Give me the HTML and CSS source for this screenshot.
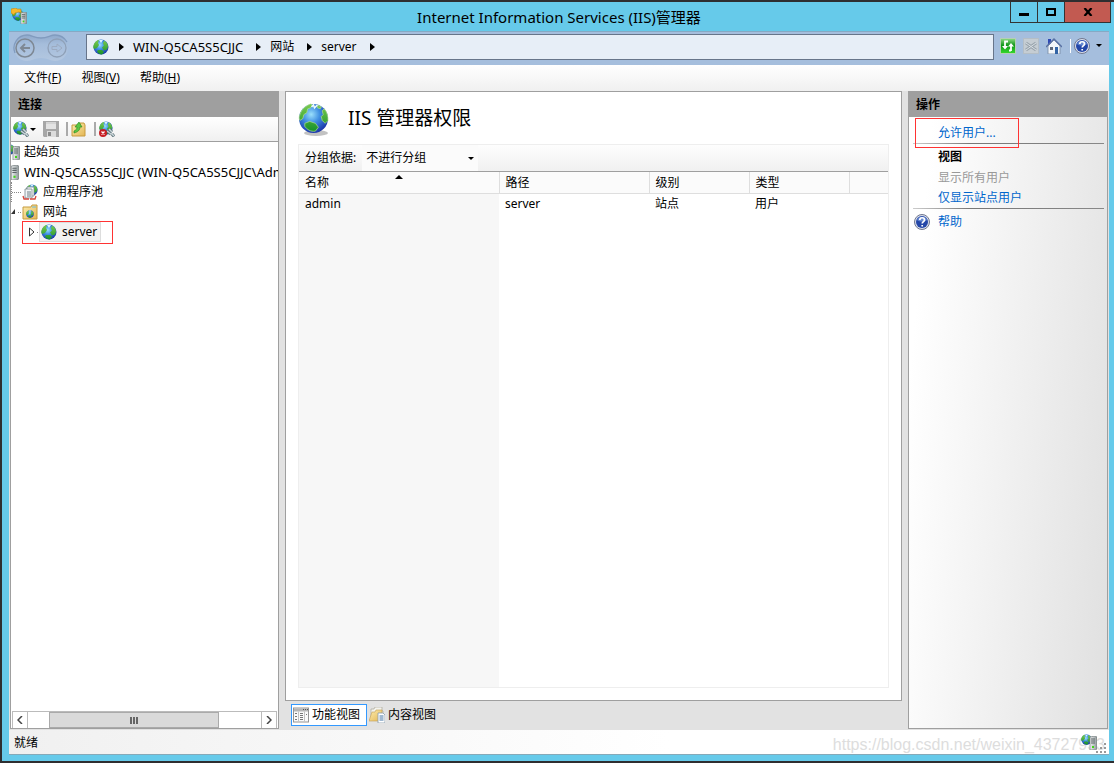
FILE: index.html
```html
<!DOCTYPE html>
<html lang="zh-CN">
<head>
<meta charset="utf-8">
<title>Internet Information Services (IIS)管理器</title>
<link rel="stylesheet" href="styles.css">
</head>
<body>
<svg class="defs" aria-hidden="true">
  <defs>
    <radialGradient id="sea" cx="0.42" cy="0.36" r="0.65"><stop offset="0" stop-color="#9be0fb"/><stop offset="0.45" stop-color="#3f8fe2"/><stop offset="1" stop-color="#1a36a8"/></radialGradient>
    <linearGradient id="leaf" x1="0" y1="0" x2="0" y2="1"><stop offset="0" stop-color="#7ccb4e"/><stop offset="1" stop-color="#16912a"/></linearGradient>
    <linearGradient id="gold" x1="0" y1="0" x2="1" y2="1"><stop offset="0" stop-color="#fdeeb0"/><stop offset="1" stop-color="#e3b553"/></linearGradient>
    <linearGradient id="steel" x1="0" y1="0" x2="1" y2="0"><stop offset="0" stop-color="#f2f4f5"/><stop offset="1" stop-color="#8e9799"/></linearGradient>
    <linearGradient id="lime" x1="0" y1="0" x2="0" y2="1"><stop offset="0" stop-color="#8fdc84"/><stop offset="0.45" stop-color="#12961a"/><stop offset="1" stop-color="#35dc2c"/></linearGradient>
    <linearGradient id="well" x1="0" y1="0" x2="0" y2="1"><stop offset="0" stop-color="#8fa9cb"/><stop offset="0.35" stop-color="#a5bddb"/><stop offset="1" stop-color="#b3c7e0"/></linearGradient>
    <symbol id="globe" viewBox="0 0 32 32">
      <circle cx="16" cy="16" r="15" fill="url(#sea)"/>
      <path d="M2 12C4 6 8 3 13 1l2 1-2 3-3 1-1 4-3 2-1 4-3 2c-1-2-1-4 0-6zM27 6c3 3 4 8 4 12l-3 3-3-3-1-4 2-2-1-4zM7 21l5-2 6 2 3 4-3 4c-5 1-9-2-11-5zM20 2l4 2-1 2-3-1z" fill="url(#leaf)" stroke="#b7e38c" stroke-width="0.7"/>
      <path d="M14 4l2-2 1 3 3-3" fill="none" stroke="#eefbff" stroke-width="1.500"/>
    </symbol>
    <symbol id="minglobe" viewBox="0 0 16 16">
      <circle cx="8" cy="8" r="7.500" fill="url(#sea)"/>
      <path d="M1 5C2 3 4 1 6 1L5 4l1 2-2 3-3 1C0 9 0 7 1 5zM11 1.500c2 1 4 3 4 6l-1 3-3 1-2-3 2-2-1-2zM5 11l4 0 2 2-2 2.500c-2 0-4-1-5-3z" fill="url(#leaf)"/>
      <path d="M6 1l2 3 2-3z" fill="#def5ff"/>
    </symbol>
    <symbol id="server" viewBox="0 0 8 14">
      <path d="M1 1l5-1 2 1v12l-2 1H1z" fill="url(#steel)" stroke="#727b7d" stroke-width="0.7"/>
      <path d="M2 3h4M2 5h4M2 7h4" stroke="#5d6668"/>
      <rect x="3" y="10" width="2" height="2" fill="#41d51a"/>
    </symbol>
    <symbol id="iis" viewBox="0 0 17 17">
      <use href="#minglobe" x="1" y="1" width="12" height="12"/>
      <path d="M0 1l5-1 1 1h4v4L8 4 4 5 3 7 0 5z" fill="#f6b92b" stroke="#b67612" stroke-width="0.5"/>
      <use href="#server" x="9" y="4" width="7" height="12"/>
    </symbol>
    <symbol id="host" viewBox="0 0 16 16">
      <use href="#minglobe" x="0" y="0" width="11" height="11"/>
      <use href="#server" x="8" y="2" width="8" height="14"/>
    </symbol>
    <symbol id="connect" viewBox="0 0 16 16">
      <use href="#minglobe" x="0" y="0" width="14" height="14"/>
      <path d="M8 10l4 3M10 8l3 3M13 13l2 2.500" fill="none" stroke="#60757b" stroke-width="3"/>
      <path d="M8 10l4 3M10 8l3 3M13 13l2 2" fill="none" stroke="#c8d6da" stroke-width="1.500"/>
    </symbol>
    <symbol id="disconnect" viewBox="0 0 16 16">
      <use href="#connect" width="16" height="16"/>
      <circle cx="4" cy="12" r="4" fill="#c81f25"/><path d="M2.500 10.500l3 3m0-3l-3 3" stroke="#fff" stroke-width="1.300"/>
    </symbol>
    <symbol id="save" viewBox="0 0 16 16">
      <path d="M0 0h16v16H1l-1-1z" fill="#a7a7a7"/><rect x="3" y="1" width="10" height="7" fill="#e3e3e3"/><path d="M3 2h10" stroke="#c4c4c4"/><rect x="4" y="10" width="9" height="6" fill="#dcdcdc"/><rect x="5" y="11" width="3" height="4" fill="#8c8c8c"/>
    </symbol>
    <symbol id="folderup" viewBox="0 0 16 16">
      <path d="M1 4h7l1-2h4l1 2v11H1z" fill="url(#gold)" stroke="#c69a3e"/>
      <path d="M3 10c2-1 3-2 3-4L4 6l4-5 3 5H9c0 3-2 5-6 6z" fill="#5ac745" stroke="#218218" stroke-width="0.600"/>
    </symbol>
    <symbol id="pool" viewBox="0 0 16 16">
      <use href="#minglobe" x="4" y="0" width="12" height="12"/>
      <path d="M5 3h7v9H5z" fill="#fff" stroke="#7a8791" stroke-width="0.800"/><path d="M3 5h7v9H3z" fill="#f2f5f7" stroke="#7a8791" stroke-width="0.800"/><path d="M5 8h4M5 10h4M5 12h4" stroke="#718087"/>
      <path d="M1 12l1 3h5M14 12l-1 3H8" fill="none" stroke="#d4463c" stroke-width="1.300"/>
    </symbol>
    <symbol id="sites" viewBox="0 0 16 16">
      <path d="M1 3h8l1-2h5v14H1z" fill="url(#gold)" stroke="#c69a3e"/><path d="M10 3h4" stroke="#69b7d8"/>
      <use href="#minglobe" x="4" y="6" width="8" height="8"/>
    </symbol>
    <symbol id="refresh" viewBox="0 0 16 16">
      <rect x="0.500" y="0.500" width="15" height="15" fill="url(#lime)" stroke="#b4cfb4"/>
      <path d="M8 3.500H5V9M11 12.500H9M11 13V7" fill="none" stroke="#fff" stroke-width="1.800"/>
      <path d="M2 8h6l-3 3.500zM8 8.500h6L11 5z" fill="#fff"/>
    </symbol>
    <symbol id="stop" viewBox="0 0 16 16">
      <rect x="0.500" y="0.500" width="15" height="15" fill="#c5cdd3" stroke="#b4bec6"/><path d="M3 5l10 7m0-7L3 12" stroke="#9aa5ae" stroke-width="3"/><path d="M3 5l10 7m0-7L3 12" stroke="#d8dfe4"/>
    </symbol>
    <symbol id="home" viewBox="0 0 16 16">
      <path d="M2 8l6-6 6 6v8H2z" fill="#f1f5f9" stroke="#7788a2" stroke-width="0.800"/><path d="M2 1h3v4L2 7z" fill="#2e49b4"/><path d="M0 9l8-8 8 8" fill="none" stroke="#5870a4" stroke-width="1.300"/><rect x="4" y="9" width="3" height="3" fill="#5d6779"/><rect x="9" y="9" width="3" height="7" fill="#3264a6"/>
    </symbol>
    <symbol id="help" viewBox="0 0 16 16">
      <circle cx="8" cy="8" r="7.500" fill="#d9dfed" stroke="#71788f"/><circle cx="8" cy="8" r="6" fill="#2447a8"/><path d="M3 6a5.500 5.500 0 0 1 10 0c-3 2-7 2-10 0z" fill="#6689d2"/><path d="M5.800 6c0-3 4.700-3 4.700 0 0 1.600-2.300 1.600-2.300 3.500M8.200 11v1.500" fill="none" stroke="#fff" stroke-width="1.700"/>
    </symbol>
    <symbol id="features" viewBox="0 0 16 15">
      <rect x="0.500" y="0.500" width="15" height="14" fill="#fafafa" stroke="#949494"/><path d="M1 2.500h14" stroke="#b6b6b6" stroke-width="3"/><path d="M10 2h1m1 0h1m1 0h1" stroke="#555"/><path d="M5.500 4v10M11.500 4v10" stroke="#c3c3c3"/><path d="M2 6h2M2 9h2M2 12h2M7 6h3M7 8h3M7 10h3M7 12h3M13 7h1" stroke="#777"/>
    </symbol>
    <symbol id="content" viewBox="0 0 16 16">
      <path d="M2 2h3l1-2h7v4h1v8H2z" fill="#f3f3ee" stroke="#aaa89a" stroke-width="0.700"/><path d="M0 14L3 5h3l1-2h6v5l-3 6z" fill="url(#gold)" stroke="#c49d53" stroke-width="0.600"/>
      <path d="M9 6h5l2 2v8H9z" fill="#fff" stroke="#899dac" stroke-width="0.800"/><path d="M10.500 9h4M10.500 11h4M10.500 13h4" stroke="#4474a5"/>
    </symbol>
  </defs>
</svg>
<div class="window">
  <header class="titlebar">
    <svg class="app-icon"><use href="#iis"/></svg>
    <h1 class="title">Internet Information Services (IIS)管理器</h1>
    <div class="window-buttons">
      <button class="win-btn" aria-label="最小化"><svg viewBox="0 0 10 8"><path d="M0 6.500h10" stroke="#000" stroke-width="3"/></svg></button>
      <button class="win-btn" aria-label="最大化"><svg viewBox="0 0 10 8"><path d="M1 1h8v6H1z" fill="none" stroke="#000" stroke-width="2"/></svg></button>
      <button class="win-btn close" aria-label="关闭"><svg viewBox="0 0 10 8"><path d="M1.500 0l7 8m0-8l-7 8" stroke="#000" stroke-width="2.200"/></svg></button>
    </div>
  </header>
  <div class="client">
    <div class="navbar">
      <div class="history">
        <svg class="history-well" viewBox="0 0 56 28"><path d="M14 1c5 0 7 3 14 3s9-3 14-3a13 13 0 0 1 0 26c-5 0-7-3-14-3s-9 3-14 3A13 13 0 0 1 14 1z" fill="url(#well)"/><path d="M2 19A13 13 0 0 1 14 1c5 0 7 3 14 3s9-3 14-3c5 0 9 2 12 7" fill="none" stroke="#819bbe" stroke-width="1.300"/></svg>
        <button class="history-btn" aria-label="后退"><svg viewBox="0 0 20 20"><circle cx="10" cy="10" r="9" fill="none" stroke="#7e8894" stroke-width="1.500"/><path d="M15 10H6m4-4l-4 4 4 4" fill="none" stroke="#7e8894" stroke-width="2"/></svg></button>
        <button class="history-btn" aria-label="前进" disabled><svg viewBox="0 0 20 20"><circle cx="10" cy="10" r="9" fill="none" stroke="#8fa0b7" stroke-width="1.300"/><path d="M5 8.500h5V6l5 4-5 4v-2.500H5z" fill="none" stroke="#9cabc1"/></svg></button>
      </div>
      <nav class="address" aria-label="路径">
        <svg class="icon"><use href="#minglobe"/></svg><i class="arrow"></i>
        <button class="crumb host-name">WIN-Q5CA5S5CJJC</button><i class="arrow"></i>
        <button class="crumb">网站</button><i class="arrow"></i>
        <button class="crumb">server</button><i class="arrow"></i>
      </nav>
      <div class="nav-tools">
        <button class="tool" aria-label="刷新"><svg class="icon"><use href="#refresh"/></svg></button>
        <button class="tool" aria-label="停止" disabled><svg class="icon"><use href="#stop"/></svg></button>
        <button class="tool" aria-label="主页"><svg class="icon"><use href="#home"/></svg></button>
        <i class="divider"></i>
        <button class="tool help-tool" aria-label="帮助"><svg class="icon"><use href="#help"/></svg><i class="caret"></i></button>
      </div>
    </div>
    <nav class="menubar">
      <button>文件(<u>F</u>)</button><button>视图(<u>V</u>)</button><button>帮助(<u>H</u>)</button>
    </nav>
    <div class="panes">
      <aside class="pane connections">
        <h2 class="pane-title">连接</h2>
        <div class="toolbar">
          <button class="tool connect-tool" aria-label="连接"><svg class="icon"><use href="#connect"/></svg><i class="caret"></i></button>
          <button class="tool" aria-label="保存" disabled><svg class="icon"><use href="#save"/></svg></button>
          <i class="divider dark"></i>
          <button class="tool" aria-label="向上"><svg class="icon"><use href="#folderup"/></svg></button>
          <i class="divider dark"></i>
          <button class="tool" aria-label="断开连接"><svg class="icon"><use href="#disconnect"/></svg></button>
        </div>
        <ul class="tree">
          <li><svg class="half-icon" viewBox="7 0 9 16"><use href="#host" width="16" height="16"/></svg><button>起始页</button></li>
          <li><svg class="half-icon" viewBox="7 0 9 16"><use href="#server" x="6" y="1" width="9" height="15"/></svg><button class="host-name">WIN-Q5CA5S5CJJC (WIN-Q5CA5S5CJJC\Adm</button></li>
          <li class="child"><i class="branch"></i><svg class="icon"><use href="#pool"/></svg><button>应用程序池</button></li>
          <li class="child"><svg class="expander" viewBox="0 0 11 10"><path d="M4 2v5H0z" fill="#333"/><path d="M7 5.500h4" stroke="#888" stroke-dasharray="1 1"/></svg><svg class="icon"><use href="#sites"/></svg><button>网站</button></li>
          <li class="grandchild"><svg class="twisty" viewBox="0 0 11 10"><path d="M0.500 1v8L5 5z" fill="#fff" stroke="#333"/><path d="M8 5.500h3" stroke="#888" stroke-dasharray="1 1"/></svg><button class="selected"><svg class="icon"><use href="#minglobe"/></svg>server</button><span class="mark mark-site"></span></li>
        </ul>
        <div class="scrollbar">
          <button class="scroll-btn" aria-label="向左滚动"><svg viewBox="0 0 6 8"><path d="M5 0L1 4l4 4" fill="none" stroke="#444" stroke-width="1.500"/></svg></button>
          <div class="track"><div class="thumb"><i></i><i></i><i></i></div></div>
          <button class="scroll-btn" aria-label="向右滚动"><svg viewBox="0 0 6 8"><path d="M1 0l4 4-4 4" fill="none" stroke="#444" stroke-width="1.500"/></svg></button>
        </div>
      </aside>
      <main class="center">
        <section class="page">
          <header class="page-head"><svg class="page-icon" viewBox="0 0 32 34"><ellipse cx="18" cy="30" rx="12" ry="3" fill="#999" opacity="0.600"/><use href="#globe" width="31" height="31"/></svg><h2>IIS 管理器权限</h2></header>
          <div class="list">
            <div class="groupbar"><label for="group">分组依据:</label><div class="combo"><select id="group"><option>不进行分组</option></select><i class="caret"></i></div></div>
            <table>
              <colgroup><col class="c-name"><col class="c-path"><col class="c-level"><col class="c-type"><col></colgroup>
              <thead><tr><th class="sorted">名称</th><th>路径</th><th>级别</th><th>类型</th><th></th></tr></thead>
              <tbody><tr><td>admin</td><td>server</td><td>站点</td><td>用户</td><td></td></tr></tbody>
            </table>
          </div>
        </section>
        <div class="views">
          <button class="view active"><svg class="icon"><use href="#features"/></svg>功能视图</button>
          <button class="view"><svg class="icon"><use href="#content"/></svg>内容视图</button>
        </div>
      </main>
      <aside class="pane actions">
        <h2 class="pane-title">操作</h2>
        <div class="action-list">
          <div class="action first"><a href="#">允许用户...</a><span class="mark mark-allow"></span></div>
          <hr>
          <h3 class="action">视图</h3>
          <div class="action"><span class="off">显示所有用户</span></div>
          <div class="action"><a href="#">仅显示站点用户</a></div>
          <hr>
          <div class="action last"><svg class="icon"><use href="#help"/></svg><a href="#">帮助</a></div>
        </div>
      </aside>
    </div>
    <footer class="statusbar"><span>就绪</span><span class="watermark">https://blog.csdn.net/weixin_43727933</span>
      <svg class="icon"><use href="#host"/></svg>
      <svg class="grip" viewBox="0 0 12 12"><path d="M8 1h2v2H8zM4 5h2v2H4zM8 5h2v2H8zM0 9h2v2H0zM4 9h2v2H4zM8 9h2v2H8z" fill="#999"/></svg>
    </footer>
  </div>
</div>
</body>
</html>
```
FILE: styles.css
```css
* { box-sizing: border-box; }
body {
  margin: 0;
  min-height: 100vh;
  display: flex;
  padding: 2px 0 2px 2px;
  background: #2e2e30;
  color: #000;
  font: 12px/20px "Noto Sans", "Noto Sans CJK SC", sans-serif;
}
button { margin: 0; padding: 0; border: 0; background: none; font: inherit; color: inherit; white-space: nowrap; }
h1, h2, h3, ul { margin: 0; padding: 0; font: inherit; }
svg { display: block; flex: none; }
.defs { position: absolute; width: 0; height: 0; }
.icon { width: 16px; height: 16px; }
.tool { display: flex; align-items: center; }
.caret { flex: none; border: 3px solid transparent; border-top-color: #000; border-bottom: 0; }
.divider { width: 1px; height: 14px; background: #fff; }
.divider.dark { width: 2px; background: #aaa; }
.mark { position: absolute; border: 1px solid #f33; pointer-events: none; }
.host-name { font-size: 13px; }

.window { flex: 1; min-width: 0; display: flex; flex-direction: column; background: #66caea; padding: 0 5px 6px 7px; }
.titlebar { display: grid; grid-template-columns: 1fr auto 1fr; height: 29px; align-items: center; }
.app-icon { width: 17px; height: 17px; margin-left: 2px; }
.title { font-size: 15px; }
.window-buttons { display: flex; align-self: start; justify-self: end; border: 1px solid #333; border-top: 0; margin-right: -2px; }
.win-btn { display: grid; place-items: center; width: 27px; height: 20px; border-right: 1px solid #333; }
.win-btn svg { width: 10px; height: 8px; }
.win-btn.close { width: 45px; background: #c25a51; border: 0; }

.client { flex: 1; display: flex; flex-direction: column; border-top: 1px solid #86a9c4; border-bottom: 1px solid #86a9b8; background: #e2e2e2; }
.navbar { display: flex; align-items: center; height: 33px; background: #a5bedd; }
.history { position: relative; display: flex; gap: 12px; width: 56px; height: 28px; margin: 0 17px 2px 4px; padding: 4px 2px; }
.history-well { position: absolute; inset: 0; }
.history-btn { position: relative; width: 20px; height: 20px; }
.address { flex: 1; display: flex; align-items: center; height: 26px; margin-top: -4px; padding-left: 6px; border: 1px solid #67758a; background: #e7eef7; }
.arrow { margin: 0 9px 0 13px; border: 4px solid transparent; border-left: 5px solid #000; border-right: 0; }
.address .icon + .arrow { margin-left: 10px; }
.nav-tools { display: flex; align-items: center; gap: 7px; margin: -6px 7px 0 6px; }
.nav-tools .divider { margin-left: 1px; }
.help-tool { gap: 6px; margin-left: -4px; }

.menubar { display: flex; gap: 20px; height: 26px; align-items: center; padding-left: 15px; background: linear-gradient(#fff, #f0f0f0); }
.panes { flex: 1; display: flex; gap: 6px; padding: 0 1px 1px; }
.pane { display: flex; flex-direction: column; border: 1px solid #9f9f9f; background: #fff; }
.pane-title { height: 25px; line-height: 25px; padding-left: 7px; background: #9f9f9f; font-weight: 600; }
.connections { width: 269px; }
.toolbar { display: flex; align-items: center; gap: 7px; height: 25px; padding-left: 2px; border-bottom: 1px solid #9f9f9f; background: linear-gradient(#fff, #f0f0f0); }
.connect-tool { gap: 1px; }
.toolbar .divider + .tool { margin-left: -4px; }
.tree { flex: 1; list-style: none; overflow: hidden; }
.tree li { display: flex; align-items: center; height: 20px; position: relative; }
.half-icon { width: 9px; height: 16px; margin-right: 4px; }
.child { gap: 4px; }
.branch { width: 11px; height: 20px; margin-right: -4px; border-left: 1px dotted #888; background: linear-gradient(90deg, #888 50%, transparent 50%) 0 10px / 2px 1px repeat-x; }
.expander { width: 11px; height: 10px; margin-right: -4px; }
.child .icon { margin-right: 1px; }
.grandchild { padding-left: 18px; }
.twisty { width: 11px; height: 10px; margin-right: -1px; }
.selected { display: flex; align-items: center; gap: 5px; padding: 0 3px 0 1px; border: 1px solid #ddd; background: #f2f2f2; height: 20px; }
.mark-site { left: 11px; top: -1px; width: 91px; height: 23px; }
.scrollbar { display: flex; height: 17px; margin: 0 1px; border-top: 1px solid #bbb; }
.scroll-btn { display: grid; place-items: center; width: 16px; border: 1px solid #bbb; border-width: 0 1px; }
.scroll-btn svg { width: 6px; height: 8px; }
.track { flex: 1; padding-left: 8%; }
.thumb { display: flex; justify-content: center; align-items: center; gap: 1px; width: 80%; height: 100%; border: 1px solid #aaa; background: #dadada; }
.thumb i { width: 2px; height: 7px; background: #666; }

.center { flex: 1; min-width: 0; display: flex; flex-direction: column; }
.page { flex: 1; display: flex; flex-direction: column; padding: 11px 12px 12px; border: 1px solid #9f9f9f; background: #fff; }
.page-head { display: flex; align-items: center; gap: 18px; height: 41px; }
.page-icon { width: 32px; height: 34px; margin-top: -8px; }
.page-head h2 { font-size: 19px; line-height: 28px; margin-top: -12px; }
.list { flex: 1; border: 1px solid #eee; background: linear-gradient(90deg, #f7f7f7 200px, #fff 200px); }
.groupbar { display: flex; align-items: center; height: 27px; padding-left: 6px; border-bottom: 1px solid #9f9f9f; background: linear-gradient(#fdfdfd, #f0f0f0); }
.combo { display: flex; align-items: center; width: 116px; height: 26px; margin-left: 6px; background: #fbfbfb; }
.combo select { flex: 1; appearance: none; border: 0; padding: 0 4px; background: none; font: inherit; color: inherit; }
.combo .caret { margin-right: 4px; }
table { width: 100%; table-layout: fixed; border-collapse: collapse; }
.c-name { width: 200px; } .c-path { width: 150px; } .c-level, .c-type { width: 100px; }
th, td { height: 21px; padding: 0 6px; text-align: left; font-weight: 400; line-height: 20px; }
th { padding-top: 1px; border: 1px solid #dedede; border-top: 0; border-left: 0; background: #fbfbfb; }
th:last-child { border-right: 0; }
.sorted { position: relative; }
.sorted::after { content: ""; position: absolute; left: 50%; top: 3px; margin-left: -4px; border: 4px solid transparent; border-bottom-color: #000; border-top: 0; }
.views { display: flex; gap: 2px; height: 28px; padding: 3px 0 3px 6px; }
.view { display: flex; align-items: center; gap: 3px; height: 22px; }
.view.active { padding: 0 6px 0 1px; border: 1px solid #3399ff; background: #fff; }

.actions { width: 200px; background: linear-gradient(95deg, #fff 10%, #e0e0e0); }
.action-list { padding: 5px 3px 0 4px; }
.action-list hr { height: 1px; margin: 0; border: 0; background: linear-gradient(90deg, #ccc, #777 30%, #888); }
.action { position: relative; display: flex; align-items: center; height: 20px; padding-left: 25px; }
.action.first { height: 21px; }
h3.action { height: 24px; padding-top: 2px; font-weight: 700; }
.action a { color: #0066cc; text-decoration: none; }
.off { color: #999; }
.action.last { height: 26px; padding-left: 1px; gap: 8px; }
.mark-allow { left: 2px; top: -4px; width: 104px; height: 30px; }
.statusbar { display: flex; align-items: center; height: 24px; padding: 2px 1px 0 5px; background: linear-gradient(90deg, #f0f0f0, #fff 60%); }
.watermark { margin-left: auto; margin-right: -24px; padding-top: 3px; color: #ddd; font: 16px/20px "Liberation Sans", sans-serif; }
.statusbar .icon { position: relative; margin-bottom: 3px; }
.grip { width: 12px; height: 12px; margin-left: -1px; align-self: end; }
```
